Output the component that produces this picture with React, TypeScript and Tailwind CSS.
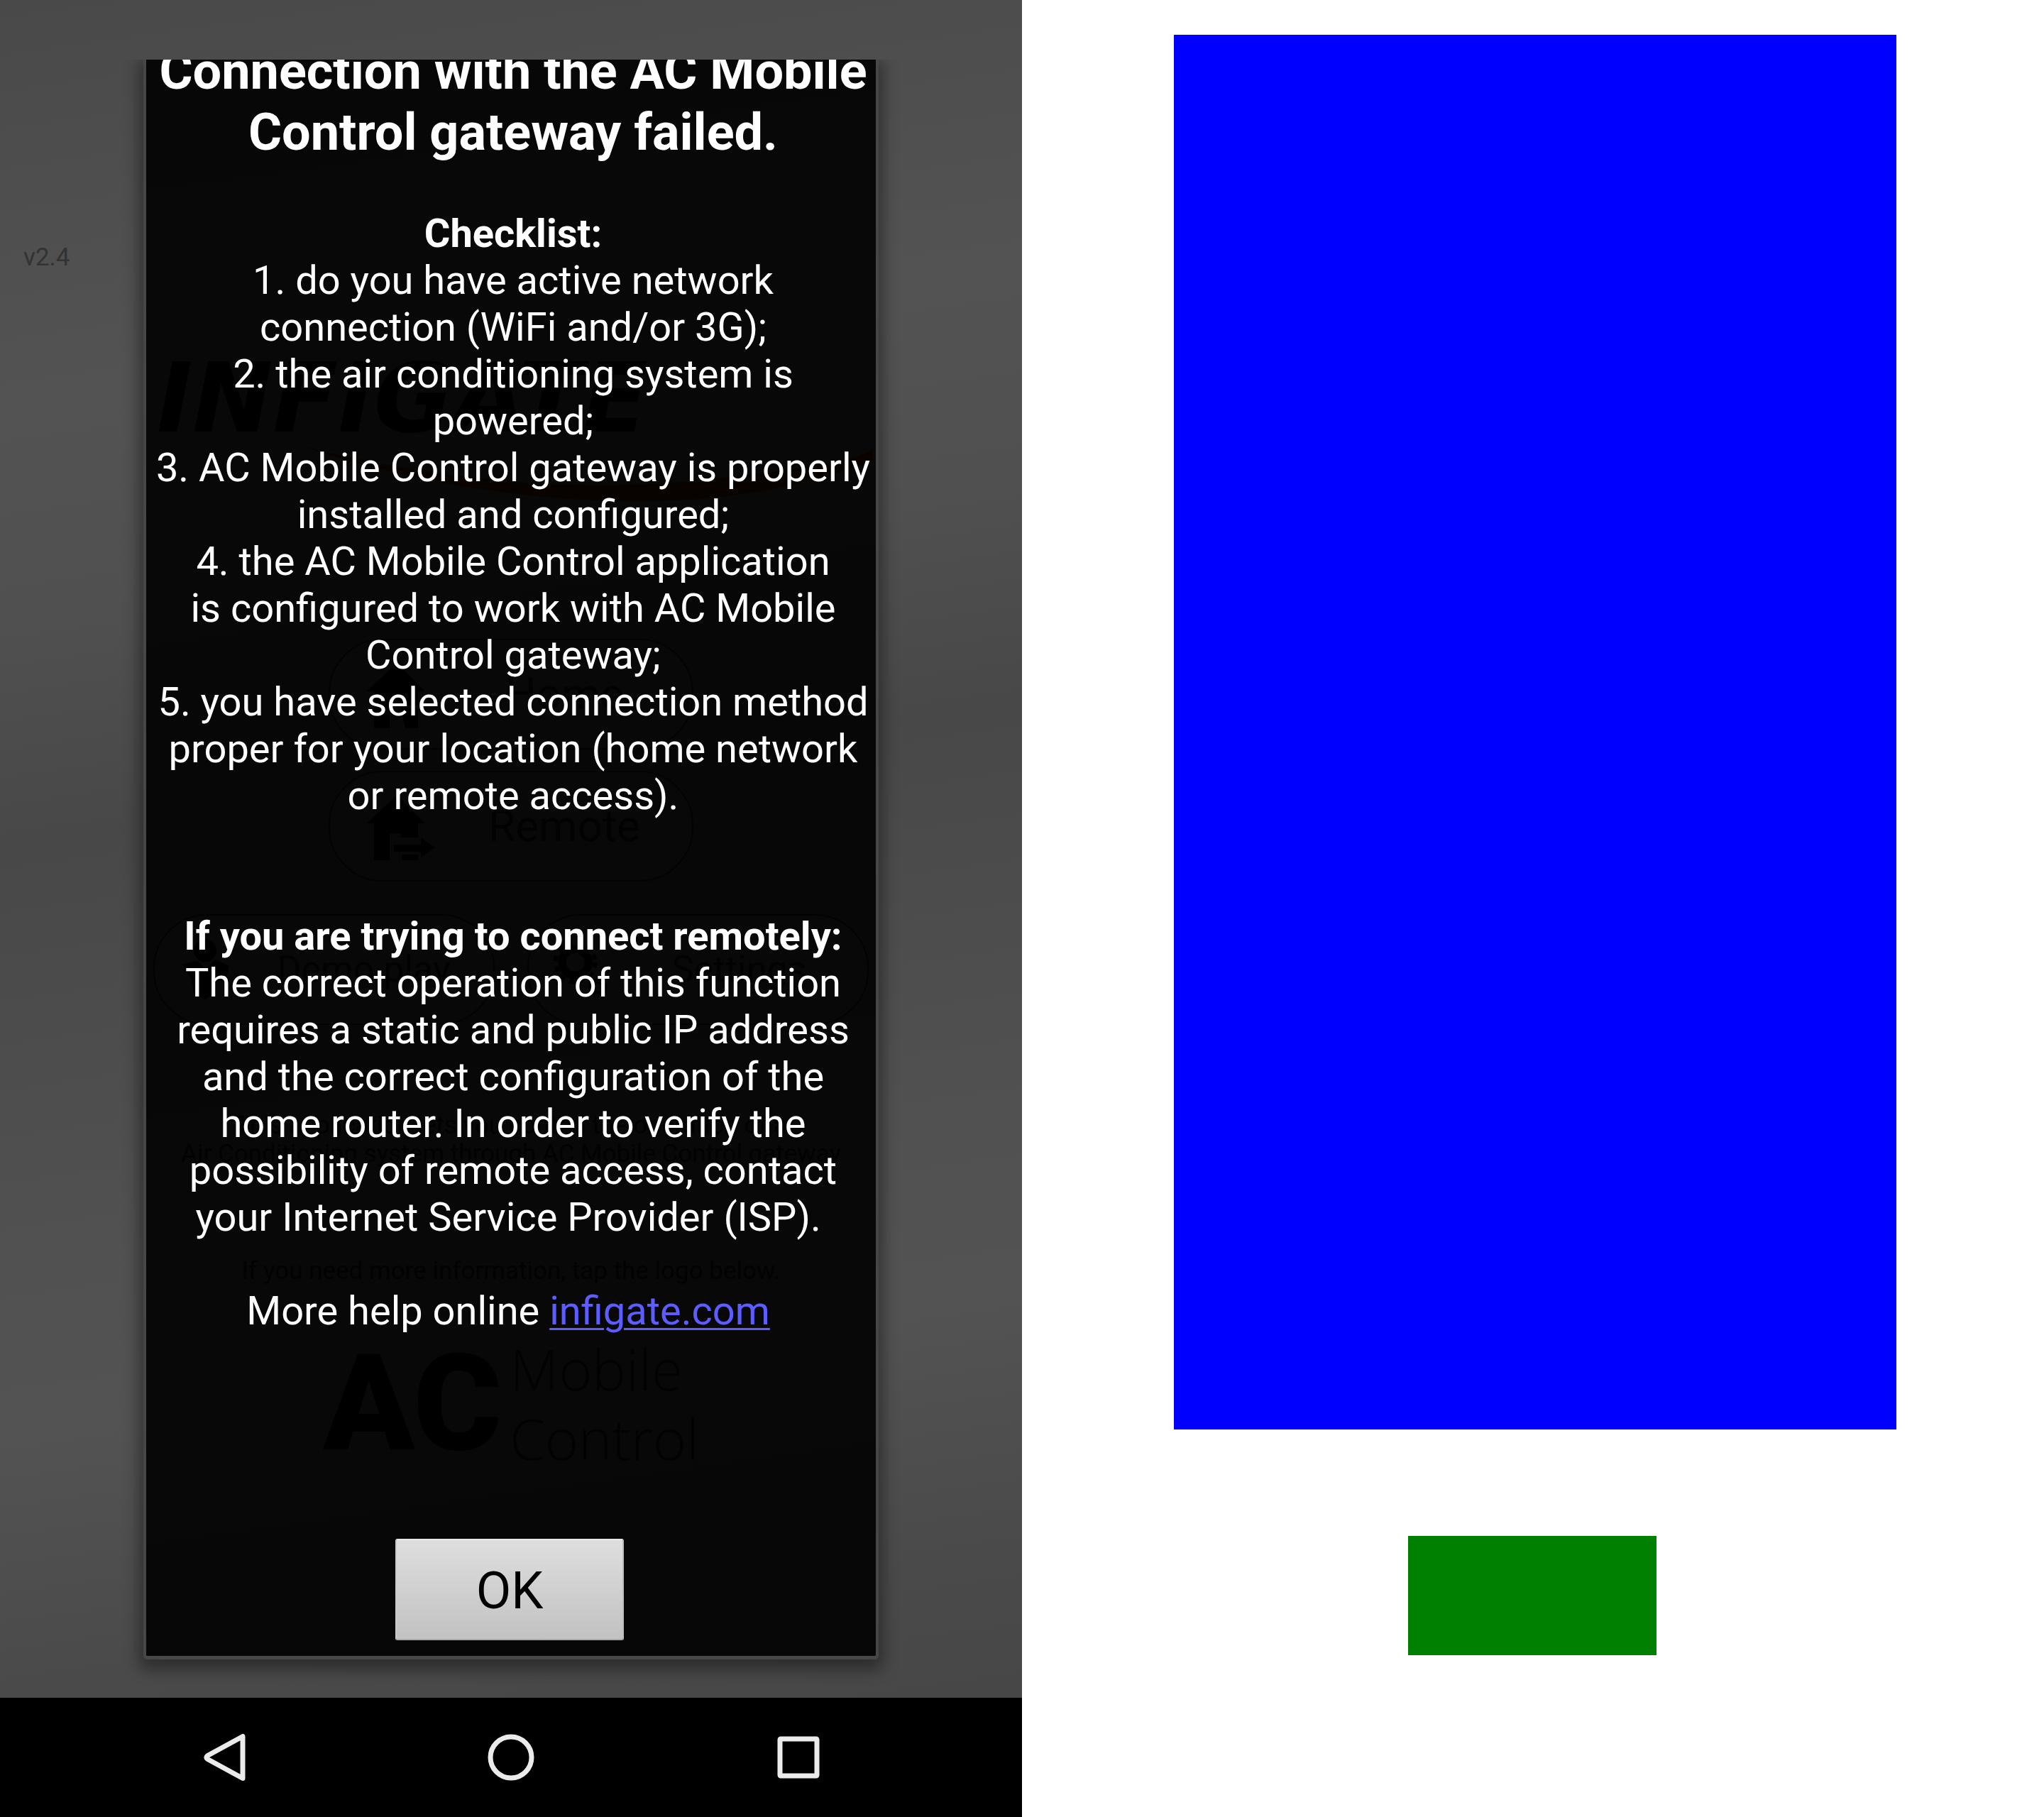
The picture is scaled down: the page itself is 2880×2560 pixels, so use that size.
import React from "react";

const checklist: string[][] = [
  ["1. do you have active network", "connection (WiFi and/or 3G);"],
  ["2. the air conditioning system is", "powered;"],
  ["3. AC Mobile Control gateway is properly", "installed and configured;"],
  ["4. the AC Mobile Control application", "is configured to work with AC Mobile", "Control gateway;"],
  ["5. you have selected connection method", "proper for your location (home network", "or remote access)."],
];

const remoteHelp: string[] = [
  "The correct operation of this function",
  "requires a static and public IP address",
  "and the correct configuration of the",
  "home router. In order to verify the",
  "possibility of remote access, contact",
  "your Internet Service Provider (ISP).\u00a0",
];

function Lines({ lines }: { lines: string[] }) {
  return (
    <>
      {lines.map((line) => (
        <span key={line} className="block">
          {line}
        </span>
      ))}
    </>
  );
}

function HouseIcon({ arrow = false }: { arrow?: boolean }) {
  return (
    <svg viewBox="0 0 100 100" className="h-[100px] w-[100px] shrink-0" fill="#000" aria-hidden="true">
      <path d="M44 6 84 46H74V66H50V60H34V98H12V46H2Z" />
      {arrow ? <path d="M40 76H78V66L98 80 78 94V86H40Z" /> : <path d="M50 70H74V98H56Z" />}
      {arrow && <path d="M52 90H74V98H52Z" />}
    </svg>
  );
}

function PersonIcon() {
  return (
    <svg viewBox="0 0 90 100" className="h-[90px] w-[80px] shrink-0" fill="#000" aria-hidden="true">
      <circle cx="44" cy="20" r="18" />
      <path d="M8 42 32 36 44 50 60 34 82 44 76 70 60 66V86L44 98 26 88 22 66Z" />
    </svg>
  );
}

function GearIcon() {
  return (
    <svg viewBox="0 0 90 90" className="h-[84px] w-[84px] shrink-0" fill="none" stroke="#000" aria-hidden="true">
      <circle cx="36" cy="34" r="20" strokeWidth="12" />
      <circle cx="36" cy="34" r="30" strokeWidth="6" strokeDasharray="8 8" />
      <circle cx="70" cy="72" r="10" strokeWidth="8" />
    </svg>
  );
}

const pill =
  "flex h-[156px] items-center rounded-[76px] border-2 border-[#1c1c1c] bg-white/5 leading-[70px] text-[#141414]";

function HomeScreen() {
  return (
    <div
      inert
      className="col-start-1 row-start-1 flex flex-col bg-[linear-gradient(172deg,#494949_0%,#4c4d4c_8%,#525352_22%,#4f504f_34%,#484848_46%,#4c4d4c_58%,#505150_68%,#525352_78%,#4a4a4a_92%,#474747_100%)] pt-[343px] text-[35px] leading-10 text-[#141414]"
    >
      <p className="pl-[33px] text-[#323332]">v2.4</p>
      <p className="mt-[130px] pl-[221px] font-['DejaVu_Sans',sans-serif] text-[135px] leading-[98px] font-bold text-black italic">
        INFIGATE
      </p>
      <svg viewBox="0 0 810 90" className="mt-4 ml-[420px] h-[90px] w-[810px]" aria-hidden="true">
        <path d="M0 0Q300 76 560 50T810 0V22Q640 88 420 78T0 0Z" fill="#5a2208" />
      </svg>
      <div className="mx-auto mt-[183px] flex w-[514px] flex-col gap-[30px] text-[62px]">
        <button type="button" className={pill + " pl-[50px]"}>
          <HouseIcon />
          <span className="flex-1 text-center">Home</span>
        </button>
        <button type="button" className={pill + " pl-[50px]"}>
          <HouseIcon arrow />
          <span className="flex-1 text-center">Remote</span>
        </button>
      </div>
      <div className="mx-auto mt-[46px] flex w-[70%] gap-[46px] text-center text-[52px]">
        <button type="button" className={pill + " flex-1 pl-8"}>
          <PersonIcon />
          <span className="flex-1">Demo play</span>
        </button>
        <button type="button" className={pill + " flex-1 pl-8"}>
          <GearIcon />
          <span className="flex-1">Settings</span>
        </button>
      </div>
      <p className="mt-[122px] text-center">
        This application lets you control the operation of a
        <br />
        Air Conditioning system through AC Mobile Control gateway
      </p>
      <p className="mt-[125px] text-center">If you need more information, tap the logo below.</p>
      <div className="mx-auto mt-[68px] flex w-[530px] items-center justify-between">
        <span className="text-[190px] leading-[180px] font-black text-black">AC</span>
        <span className="font-['Open_Sans',sans-serif] text-[80px] leading-[98px] font-light">
          Mobile
          <br />
          Control
        </span>
      </div>
    </div>
  );
}

function FailureDialog() {
  return (
    <section
      role="dialog"
      aria-labelledby="dialog-title"
      className="z-10 col-start-1 row-start-1 mx-auto mt-[84px] mb-[54px] flex w-[72%] flex-col rounded-b-md border-x-4 border-b-[5px] border-[#464747] bg-black/90 shadow-[0_8px_22px_6px_rgba(0,0,0,0.4)] [clip-path:inset(0_-40px_-40px_-40px)]"
    >
      <div className="flex-1 overflow-hidden pl-1.5 text-center text-[56px] leading-[66px] whitespace-nowrap text-white">
        <h1 id="dialog-title" className="-mt-[26px] text-[72px] leading-[86px] font-bold">
          <Lines lines={["Connection with the AC Mobile", "Control gateway failed."]} />
        </h1>
        <h2 className="mt-[66px] font-bold">Checklist:</h2>
        <ol>
          {checklist.map((item) => (
            <li key={item[0]}>
              <Lines lines={item} />
            </li>
          ))}
        </ol>
        <h2 className="mt-[132px] font-bold">If you are trying to connect remotely:</h2>
        <p>
          <Lines lines={remoteHelp} />
        </p>
        <p className="mt-[66px]">
          More help online{" "}
          <a href="#infigate" className="text-[#5c5cff] underline decoration-[3px] underline-offset-[5px]">
            infigate.com
          </a>
          {"\u00a0"}
        </p>
      </div>
      <div className="flex justify-center pr-1 pb-[22px]">
        <button
          type="button"
          className="h-[143px] w-[322px] rounded-[3px] border-2 border-t-[#e8e8e8] border-r-[#bdbdbd] border-b-[#a9a9a9] border-l-[#c9c9c9] bg-linear-to-b from-[#dedede] to-[#c2c2c2] pt-1 text-[72px] leading-[84px] text-black"
        >
          OK
        </button>
      </div>
    </section>
  );
}

function NavigationBar() {
  return (
    <nav className="flex h-[168px] items-center justify-between bg-black px-[19.6%]">
      <button type="button" aria-label="Back">
        <svg viewBox="0 0 66 70" className="h-[70px] w-[66px]" fill="none" stroke="#ebebeb" strokeWidth="7" strokeLinejoin="round">
          <path d="M60 5.500V64.500L10.500 37.500Q7 35 10.500 32.500Z" />
        </svg>
      </button>
      <button type="button" aria-label="Home">
        <svg viewBox="0 0 66 66" className="h-[66px] w-[66px]" fill="none" stroke="#ebebeb" strokeWidth="7">
          <circle cx="33" cy="33" r="29" />
        </svg>
      </button>
      <button type="button" aria-label="Recent apps">
        <svg viewBox="0 0 66 66" className="h-[66px] w-[66px]" fill="none" stroke="#ebebeb" strokeWidth="7" strokeLinejoin="round">
          <rect x="7" y="7" width="52" height="52" rx="1" />
        </svg>
      </button>
    </nav>
  );
}

export default function App() {
  return (
    <div className="grid min-h-screen grid-cols-2 bg-white font-['Roboto',sans-serif]">
      <div className="flex flex-col">
        <main className="grid flex-1 grid-cols-1">
          <HomeScreen />
          <FailureDialog />
        </main>
        <NavigationBar />
      </div>
      <div className="flex flex-col pt-[49px] pb-[228px]">
        <div className="ml-[14.86%] w-[70.7%] flex-1 bg-[#0000ff]" />
        <div className="mt-[150px] ml-[37.8%] h-[168px] w-[24.3%] bg-[#008000]" />
      </div>
    </div>
  );
}
